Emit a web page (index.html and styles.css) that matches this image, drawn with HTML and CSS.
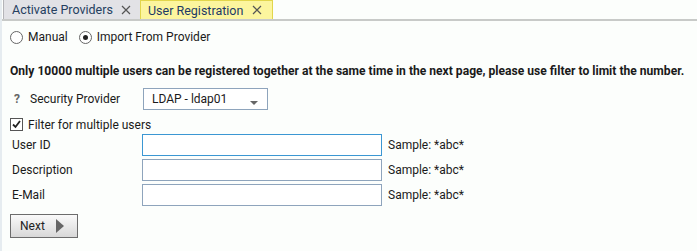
FILE: index.html
```html
<!DOCTYPE html>
<html lang="en">

<head>
    <meta charset="UTF-8">
    <title>User Registration</title>
    <link rel="stylesheet" href="styles.css">
</head>

<body>
    <div class="tabs">
        <div class="tab">Activate Providers<svg class="close" width="10" height="10" viewBox="0 0 10 10"><path d="M1 1L9 9M9 1L1 9" stroke="#555" stroke-width="1.2" fill="none"/></svg></div>
        <div class="tab active">User Registration<svg class="close" width="10" height="10" viewBox="0 0 10 10"><path d="M1 1L9 9M9 1L1 9" stroke="#555" stroke-width="1.2" fill="none"/></svg></div>
    </div>
    <main class="page">
        <div class="modes">
            <label class="option"><span class="radio"></span>Manual</label>
            <label class="option"><span class="radio checked"></span>Import From Provider</label>
        </div>
        <p class="notice">Only 10000 multiple users can be registered together at the same time in the next page, please use filter to limit the number.</p>
        <div class="provider">
            <span class="help">?</span>
            <span class="provider-label">Security Provider</span>
            <div class="select">LDAP - ldap01<span class="arrow"></span></div>
        </div>
        <label class="option filter"><span class="check"><svg width="11" height="11" viewBox="0 0 11 11"><path d="M2 5.5L4.5 8L9 2" stroke="#222" stroke-width="1.8" fill="none"/></svg></span>Filter for multiple users</label>
        <div class="fields">
            <label class="field-label">User ID</label>
            <div class="input focus"></div>
            <span class="sample">Sample: *abc*</span>
            <label class="field-label">Description</label>
            <div class="input"></div>
            <span class="sample">Sample: *abc*</span>
            <label class="field-label">E-Mail</label>
            <div class="input"></div>
            <span class="sample">Sample: *abc*</span>
        </div>
        <button class="next">Next<span class="play"></span></button>
    </main>
</body>

</html>
```

FILE: styles.css
```css
body {
    margin: 0px;
    font-family: Roboto, "Liberation Sans", sans-serif;
    font-size: 12px;
    color: #1a1a1a;
    background: #fcfefc;
    border-left: 2px solid #e6ecf0;
    height: 251px;
    box-sizing: border-box;
}

.tabs {
    display: flex;
    padding-left: 1px;
    border-bottom: 2px solid #c8cac8;
}

.tab {
    height: 19px;
    width: 137px;
    box-sizing: border-box;
    padding: 0px 9px 0px 8px;
    display: flex;
    align-items: center;
    justify-content: space-between;
    background: #e2e2e6;
    border-left: 1px solid #b4b4b8;
    color: #25405f;
    font-size: 12.5px;
}

.tab.active {
    width: 133px;
    background: #fcf59e;
    border: 1px solid #e2d64c;
    border-bottom: none;
    color: #1d3a66;
    padding: 0px 10px 0px 7px;
}

.page {
    padding: 7px 8px;
}

.modes {
    display: flex;
    gap: 11px;
    height: 18px;
    align-items: center;
}

.option {
    display: flex;
    align-items: center;
    gap: 5px;
}

.radio {
    width: 11px;
    height: 11px;
    border: 1px solid #666;
    border-radius: 50%;
    background: #fff;
    display: flex;
    align-items: center;
    justify-content: center;
}

.radio.checked::after {
    content: "";
    width: 5px;
    height: 5px;
    border-radius: 50%;
    background: #222;
}

.notice {
    font-weight: bold;
    font-size: 12.1px;
    white-space: nowrap;
    margin: 18px 0px 0px 0px;
}

.provider {
    display: flex;
    align-items: center;
    margin-top: 10px;
    height: 22px;
}

.help {
    color: #666;
    font-weight: bold;
    width: 20px;
    padding-left: 4px;
    box-sizing: border-box;
}

.provider-label {
    width: 113px;
}

.select {
    width: 125px;
    height: 22px;
    box-sizing: border-box;
    border: 1px solid #8ea4bc;
    background: #fff;
    padding-left: 8px;
    display: flex;
    align-items: center;
    position: relative;
}

.arrow {
    position: absolute;
    right: 9px;
    top: 12px;
    border-left: 4px solid transparent;
    border-right: 4px solid transparent;
    border-top: 4px solid #666;
}

.filter {
    margin-top: 5px;
    height: 19px;
}

.check {
    width: 11px;
    height: 11px;
    border: 1px solid #555;
    background: #fff;
    display: flex;
}

.fields {
    display: grid;
    grid-template-columns: 124px 240px auto;
    column-gap: 6px;
    row-gap: 3px;
    align-items: center;
    margin-top: 0px;
    padding-left: 2px;
}

.input {
    height: 22px;
    box-sizing: border-box;
    border: 1px solid #8ea4bc;
    background: #fff;
}

.input.focus {
    border-color: #3b97d3;
}

.next {
    margin-top: 8px;
    width: 68px;
    height: 24px;
    border: 1px solid #6c6c6c;
    background: linear-gradient(#fafafa, #d8d8d8);
    font-family: inherit;
    font-size: 12px;
    display: flex;
    align-items: center;
    gap: 11px;
    padding: 0px 0px 0px 9px;
    color: #222;
}

.play {
    border-top: 7px solid transparent;
    border-bottom: 7px solid transparent;
    border-left: 8px solid #666;
}
```
